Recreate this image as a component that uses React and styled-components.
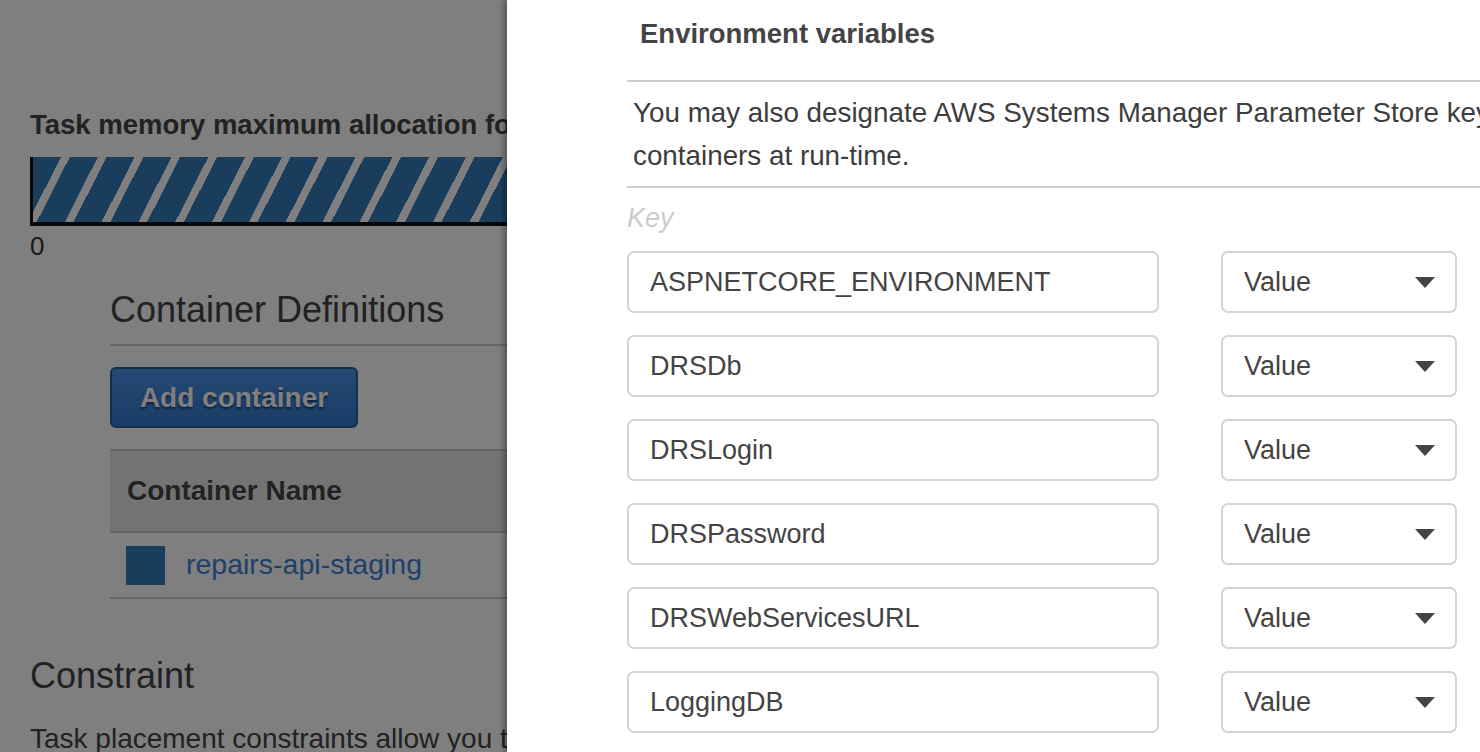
import React from 'react';
import styled, { createGlobalStyle } from 'styled-components';

const GlobalStyle = createGlobalStyle`
  html, body {
    margin: 0;
    padding: 0;
    height: 100%;
    overflow: hidden;
    background: #fff;
  }
  body {
    font-family: 'Liberation Sans', Arial, Helvetica, sans-serif;
  }
  #root {
    height: 100%;
  }
`;

const Page = styled.div`
  position: relative;
  width: 1480px;
  height: 752px;
  overflow: hidden;
  background: #fff;
`;

const Main = styled.div`
  width: 1100px;
  padding: 110px 0 0 30px;
  color: #444;
`;

const MemoryLabel = styled.div`
  font-size: 27.5px;
  font-weight: 700;
  line-height: 30px;
  white-space: nowrap;
`;

const MemoryBar = styled.div`
  margin-top: 17px;
  height: 65px;
  border-left: 3px solid #111;
  border-bottom: 4px solid #111;
  background: repeating-linear-gradient(
    117deg,
    #377ab9 0px,
    #377ab9 25px,
    #fff 25px,
    #fff 32.8px
  );
`;

const Tick = styled.div`
  font-size: 26px;
  line-height: 28px;
  margin-top: 6px;
  color: #333;
`;

const Section = styled.div`
  margin: 29px 0 0 80px;
`;

const SectionTitle = styled.h2`
  margin: 0;
  font-size: 36px;
  font-weight: 400;
  line-height: 42px;
  padding-bottom: 13px;
  border-bottom: 2px solid #ccc;
  color: #444;
  white-space: nowrap;
`;

const AddButton = styled.button`
  margin-top: 21px;
  width: 248px;
  height: 61px;
  border: 2px solid #2a5c95;
  border-radius: 6px;
  background: linear-gradient(#4a92e8, #3678d0);
  color: #fff;
  font-family: inherit;
  font-size: 28px;
  font-weight: 700;
  text-shadow: 0 2px 2px rgba(0, 0, 0, 0.5);
  padding: 0;
`;

const Table = styled.div`
  margin-top: 21px;
  border-top: 2px solid #ccc;
`;

const HeaderRow = styled.div`
  height: 80px;
  display: flex;
  align-items: center;
  padding-left: 17px;
  background: #e6e6e6;
  border-bottom: 2px solid #ccc;
  font-size: 28px;
  font-weight: 700;
  color: #444;
  text-shadow: 0 1px 0 #fff;
`;

const BodyRow = styled.div`
  height: 64px;
  display: flex;
  align-items: center;
  gap: 21px;
  padding-left: 16px;
  border-bottom: 2px solid #ccc;
`;

const Swatch = styled.span`
  width: 39px;
  height: 39px;
  background: #377bbb;
  flex: none;
`;

const NameLink = styled.a`
  font-size: 28.5px;
  color: #3e7fd6;
  text-decoration: none;
  margin-top: -2px;
`;

const PlainSection = styled.div`
  margin-top: 56px;
`;

const PlainTitle = styled.h2`
  margin: 0;
  font-size: 36px;
  font-weight: 400;
  line-height: 42px;
  color: #444;
`;

const Paragraph = styled.p`
  margin: 26px 0 0;
  font-size: 28px;
  line-height: 32px;
  color: #444;
  white-space: nowrap;
`;

const Overlay = styled.div`
  position: absolute;
  inset: 0;
  background: rgba(0, 0, 0, 0.5);
`;

const Drawer = styled.aside`
  position: absolute;
  top: 0;
  bottom: 0;
  left: 507px;
  right: 0;
  background: #fff;
  box-shadow: -3px 0 6px rgba(0, 0, 0, 0.35);
  overflow: hidden;
  padding-left: 120px;
  color: #444;
`;

const DrawerInner = styled.div`
  width: 1200px;
`;

const DrawerTitle = styled.h3`
  margin: 0;
  padding: 19px 0 0 13px;
  height: 61px;
  font-size: 27.5px;
  font-weight: 700;
  line-height: 30px;
  border-bottom: 2px solid #ccc;
  color: #444;
`;

const Help = styled.p`
  margin: 0;
  padding: 9px 0 9px 6px;
  font-size: 27.8px;
  line-height: 43px;
  border-bottom: 2px solid #ccc;
  white-space: nowrap;
  color: #3d3d3d;
`;

const KeyLabel = styled.div`
  margin-top: 15px;
  font-size: 27px;
  font-style: italic;
  line-height: 30px;
  color: #ccc;
`;

const Rows = styled.div`
  margin-top: 18px;
  display: flex;
  flex-direction: column;
  gap: 22px;
`;

const VarRow = styled.div`
  display: flex;
  gap: 62px;
`;

const KeyInput = styled.div`
  width: 532px;
  height: 62px;
  box-sizing: border-box;
  border: 2px solid #d4d4d4;
  border-radius: 7px;
  padding-left: 21px;
  display: flex;
  align-items: center;
  font-size: 27px;
  color: #444;
`;

const ValueSelect = styled.div`
  width: 236px;
  height: 62px;
  box-sizing: border-box;
  border: 2px solid #d4d4d4;
  border-radius: 7px;
  padding: 0 20px 0 21px;
  display: flex;
  align-items: center;
  justify-content: space-between;
  font-size: 27px;
  color: #444;
`;

const Caret = () => (
  <svg width="20" height="11" viewBox="0 0 20 11">
    <path d="M0 0 L20 0 L10 11 Z" fill="#444" />
  </svg>
);

const vars = [
  'ASPNETCORE_ENVIRONMENT',
  'DRSDb',
  'DRSLogin',
  'DRSPassword',
  'DRSWebServicesURL',
  'LoggingDB',
];

export default function App() {
  return (
    <Page>
      <GlobalStyle />
      <Main>
        <MemoryLabel>Task memory maximum allocation for container memory reservation (MiB)</MemoryLabel>
        <MemoryBar />
        <Tick>0</Tick>
        <Section>
          <SectionTitle>Container Definitions</SectionTitle>
          <AddButton>Add container</AddButton>
          <Table>
            <HeaderRow>Container Name</HeaderRow>
            <BodyRow>
              <Swatch />
              <NameLink href="#">repairs-api-staging</NameLink>
            </BodyRow>
          </Table>
        </Section>
        <PlainSection>
          <PlainTitle>Constraint</PlainTitle>
          <Paragraph>Task placement constraints allow you to filter the container instances used for the placement of your tasks.</Paragraph>
        </PlainSection>
      </Main>
      <Overlay />
      <Drawer>
        <DrawerInner>
          <DrawerTitle>Environment variables</DrawerTitle>
          <Help>
            You may also designate AWS Systems Manager Parameter Store keys or ARNs using the 'valueFrom' field. ECS will inject the value into
            <br />
            containers at run-time.
          </Help>
          <KeyLabel>Key</KeyLabel>
          <Rows>
            {vars.map((v) => (
              <VarRow key={v}>
                <KeyInput>{v}</KeyInput>
                <ValueSelect>
                  <span>Value</span>
                  <Caret />
                </ValueSelect>
              </VarRow>
            ))}
          </Rows>
        </DrawerInner>
      </Drawer>
    </Page>
  );
}
